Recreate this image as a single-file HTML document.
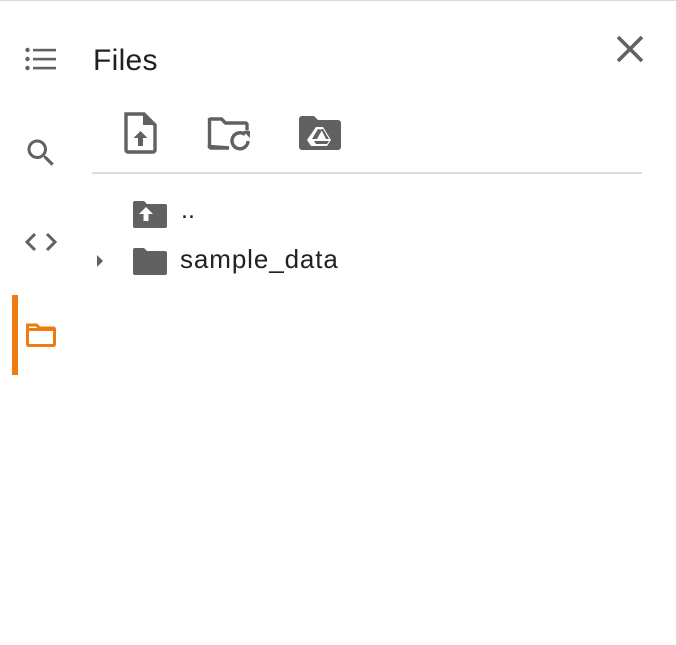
<!DOCTYPE html>
<html><head><style>
body{margin:0;width:677px;height:645px;background:#fff;font-family:"Liberation Sans",Arial,sans-serif;position:relative;overflow:hidden}
.frame{position:absolute;left:0;top:0;width:677px;height:645px;border-top:1px solid #dadada;border-right:1px solid #dadada;box-sizing:border-box}
svg{position:absolute}
.t{position:absolute;color:#212121;white-space:nowrap}
</style></head><body>
<div class="frame"></div>
<svg style="left:24px;top:45px" width="34" height="30" viewBox="0 0 34 30" fill="#616161">
<circle cx="3.5" cy="5" r="2.2"/><circle cx="3.5" cy="14" r="2.2"/><circle cx="3.5" cy="23" r="2.2"/>
<rect x="9" y="3.8" width="23" height="2.6"/><rect x="9" y="12.8" width="23" height="2.6"/><rect x="9" y="21.8" width="23" height="2.6"/>
</svg>
<svg style="left:23px;top:135px" width="36" height="36" viewBox="0 0 24 24" fill="#616161"><path d="M15.5 14h-.79l-.28-.27A6.47 6.47 0 0 0 16 9.5 6.5 6.5 0 1 0 9.5 16c1.61 0 3.09-.59 4.23-1.57l.27.28v.79l5 4.99L20.49 19l-4.99-5zm-6 0C7.01 14 5 11.99 5 9.5S7.01 5 9.5 5 14 7.01 14 9.5 11.99 14 9.5 14z"/></svg>
<svg style="left:24px;top:230px" width="34" height="24" viewBox="0 0 34 24" fill="none" stroke="#616161" stroke-width="3"><path d="M11 4 L3 12 L11 20"/><path d="M23 4 L31 12 L23 20"/></svg>
<div style="position:absolute;left:12px;top:295px;width:6px;height:80px;background:#ef7b12"></div>
<svg style="left:25px;top:321px" width="32" height="28" viewBox="0 0 32 28"><path d="M2.5 4 h9 l3 3 h14 a1 1 0 0 1 1 1 v15.5 a1 1 0 0 1-1 1 h-25 a1 1 0 0 1-1-1z" fill="none" stroke="#ef7b12" stroke-width="3"/><rect x="2" y="7" width="28" height="3" fill="#ef7b12"/></svg>
<div class="t" style="left:93px;top:44px;font-size:30px;letter-spacing:0.3px">Files</div>
<svg style="left:614px;top:33px" width="32" height="32" viewBox="0 0 32 32" stroke="#616161" stroke-width="3.6"><path d="M4 4 L28 28 M28 4 L4 28"/></svg>
<svg style="left:123px;top:112px" width="36" height="42" viewBox="0 0 36 42"><path d="M3 2 h18 l11 11 v25 a2 2 0 0 1-2 2 h-25 a2 2 0 0 1-2-2z" fill="none" stroke="#616161" stroke-width="3.4"/><path d="M20 3 L20 13 L31 13z" fill="#616161"/><path d="M17.5 19 l-7 7 h4.5 v8 h5 v-8 h4.5z" fill="#616161"/></svg>
<svg style="left:207px;top:116px" width="46" height="38" viewBox="0 0 46 38"><path d="M2.5 3 h12 l4 4 h20 a1.5 1.5 0 0 1 1.5 1.5 v6 M22 32 h-18 a1.5 1.5 0 0 1-1.5-1.5z" fill="none" stroke="#616161" stroke-width="3.4"/><path d="M2.5 2 v30" stroke="#616161" stroke-width="3.4"/><path d="M41 25 a8 8 0 1 1-3-6.5" fill="none" stroke="#616161" stroke-width="3.4"/><path d="M36 15 h7 v7z" fill="#616161"/></svg>
<svg style="left:299px;top:116px" width="42" height="34" viewBox="0 0 42 34"><path d="M0 3 a3 3 0 0 1 3-3 h12 l4 4 h20 a3 3 0 0 1 3 3 v24 a3 3 0 0 1-3 3 h-36 a3 3 0 0 1-3-3z" fill="#616161"/><path d="M17 11 h7 l8 13 l-4 6 h-16 l-4-6z" fill="#fff"/><path d="M19 13 l-6 10 h5 l5-9z" fill="#616161"/><path d="M22 13 h2 l6 10 h-3z M15 25 h15 l-2 3 h-11z" fill="#616161"/></svg>
<div style="position:absolute;left:92px;top:172px;width:550px;height:2px;background:#dcdcdc"></div>
<svg style="left:133px;top:201px" width="34" height="27" viewBox="0 0 34 27"><path d="M0 2 a2 2 0 0 1 2-2 h9 l3 3 h18 a2 2 0 0 1 2 2 v20 a2 2 0 0 1-2 2 h-30 a2 2 0 0 1-2-2z" fill="#616161"/><path d="M13 6 l-7 7 h4.5 v7 h5 v-7 h4.5z" fill="#fff"/></svg>
<div class="t" style="left:181px;top:196px;font-size:25px">..</div>
<svg style="left:95px;top:253px" width="10" height="16" viewBox="0 0 10 16"><path d="M2 2 L8 8 L2 14z" fill="#616161"/></svg>
<svg style="left:133px;top:248px" width="34" height="27" viewBox="0 0 34 27"><path d="M0 2 a2 2 0 0 1 2-2 h9 l3 3 h18 a2 2 0 0 1 2 2 v20 a2 2 0 0 1-2 2 h-30 a2 2 0 0 1-2-2z" fill="#616161"/></svg>
<div class="t" style="left:180px;top:244px;font-size:26px;letter-spacing:0.9px">sample_data</div>
</body></html>
